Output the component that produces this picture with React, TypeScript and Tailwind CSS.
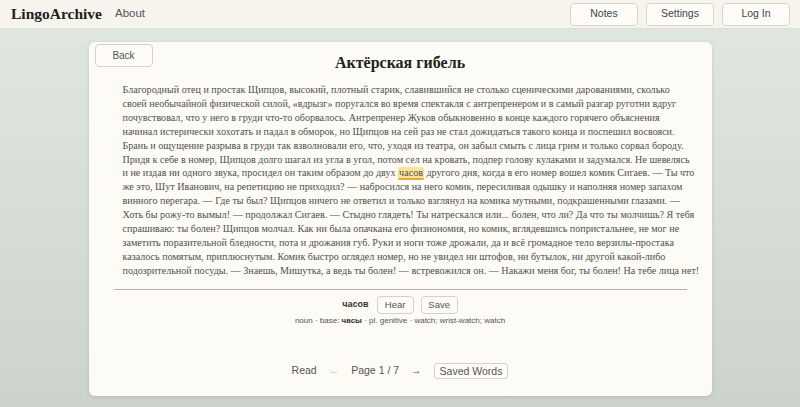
import { useState } from "react";

const serif = { fontFamily: '"Liberation Serif", "DejaVu Serif", serif' };
const sans = { fontFamily: '"Liberation Sans", Arial, sans-serif' };

// Each entry is one printed line of the page; the selected word is marked with [ ]
const LINES = [
  "Благородный отец и простак Щипцов, высокий, плотный старик, славившийся не столько сценическими дарованиями, сколько",
  "своей необычайной физической силой, «вдрызг» поругался во время спектакля с антрепренером и в самый разгар руготни вдруг",
  "почувствовал, что у него в груди что-то оборвалось. Антрепренер Жуков обыкновенно в конце каждого горячего объяснения",
  "начинал истерически хохотать и падал в обморок, но Щипцов на сей раз не стал дожидаться такого конца и поспешил восвояси.",
  "Брань и ощущение разрыва в груди так взволновали его, что, уходя из театра, он забыл смыть с лица грим и только сорвал бороду.",
  "Придя к себе в номер, Щипцов долго шагал из угла в угол, потом сел на кровать, подпер голову кулаками и задумался. Не шевелясь",
  "и не издав ни одного звука, просидел он таким образом до двух [часов] другого дня, когда в его номер вошел комик Сигаев. — Ты что",
  "же это, Шут Иванович, на репетицию не приходил? — набросился на него комик, пересиливая одышку и наполняя номер запахом",
  "винного перегара. — Где ты был? Щипцов ничего не ответил и только взглянул на комика мутными, подкрашенными глазами. —",
  "Хоть бы рожу-то вымыл! — продолжал Сигаев. — Стыдно глядеть! Ты натрескался или... болен, что ли? Да что ты молчишь? Я тебя",
  "спрашиваю: ты болен? Щипцов молчал. Как ни была опачкана его физиономия, но комик, вглядевшись попристальнее, не мог не",
  "заметить поразительной бледности, пота и дрожания губ. Руки и ноги тоже дрожали, да и всё громадное тело верзилы-простака",
  "казалось помятым, приплюснутым. Комик быстро оглядел номер, но не увидел ни штофов, ни бутылок, ни другой какой-либо",
  "подозрительной посуды. — Знаешь, Мишутка, а ведь ты болен! — встревожился он. — Накажи меня бог, ты болен! На тебе лица нет!",
];

function Line({ text }: { text: string }) {
  const m = text.match(/^(.*)\[(.+)\](.*)$/);
  if (!m) return <div className="whitespace-nowrap">{text}</div>;
  return (
    <div className="whitespace-nowrap">
      {m[1]}
      <span className="rounded-[2px] border-b-2 border-[#e2a83c] bg-[#fbe39a] px-[1px]">{m[2]}</span>
      {m[3]}
    </div>
  );
}

function HeaderButton({ children }: { children: string }) {
  return (
    <button
      className="h-[23px] w-[68px] rounded-[4px] border border-[#dcd6ca] bg-[#fdfcf8] text-[10.5px] text-[#444]"
      style={sans}
    >
      {children}
    </button>
  );
}

export default function App() {
  const [page] = useState(1);

  return (
    <div className="flex min-h-[407px] flex-col bg-gradient-to-b from-[#e1e8e1] to-[#ccd3cc]">
      <header className="flex h-[29px] items-center border-b border-[#e3ded3] bg-[#f7f4ee] pl-[11px] pr-[10px]">
        <span className="text-[15.5px] font-bold text-[#1e1e1e]" style={serif}>
          LingoArchive
        </span>
        <span className="ml-[13px] text-[11.5px] text-[#555]" style={sans}>
          About
        </span>
        <div className="ml-auto flex gap-[8px]">
          <HeaderButton>Notes</HeaderButton>
          <HeaderButton>Settings</HeaderButton>
          <HeaderButton>Log In</HeaderButton>
        </div>
      </header>

      <main className="mx-auto mt-[13px] flex w-[623px] flex-col rounded-[6px] bg-[#fcfbf5] px-[6px] pb-[17px] pt-[2px] shadow-[0_1px_4px_rgba(0,0,0,0.12)]">
        <div className="grid grid-cols-[1fr_auto_1fr] items-start">
          <button
            className="h-[23px] w-[58px] justify-self-start rounded-[4px] border border-[#d6d1c6] bg-[#fdfcf8] text-[10px] text-[#555]"
            style={sans}
          >
            Back
          </button>
          <h1 className="pt-[9px] text-[16px] font-bold leading-[20px] text-[#222]" style={serif}>
            Актёрская гибель
          </h1>
          <div />
        </div>

        <div
          className="mt-[10px] px-[28px] text-[10.1px] leading-[13.9px] text-[#505050]"
          style={serif}
        >
          {LINES.map((l, i) => (
            <Line key={i} text={l} />
          ))}
        </div>

        <div className="mx-[19px] mt-[11px] h-px bg-[#b5b0a8]" />

        <div className="mt-[6px] flex items-center justify-center gap-[7px]" style={sans}>
          <span className="mr-[1px] text-[9px] font-bold text-[#333]">часов</span>
          <button className="h-[18px] w-[37px] rounded-[4px] border border-[#d6d1c6] bg-[#fdfcf8] text-[9.5px] text-[#555]">
            Hear
          </button>
          <button className="h-[18px] w-[37px] rounded-[4px] border border-[#d6d1c6] bg-[#fdfcf8] text-[9.5px] text-[#555]">
            Save
          </button>
        </div>
        <div className="mt-[1px] text-center text-[8px] leading-[11px] text-[#555]" style={sans}>
          noun · base: <span className="font-bold text-[#333]">часы</span> · pl. genitive · watch; wrist-watch; watch
        </div>

        <nav
          className="mt-[37px] flex items-center justify-center gap-[12px] text-[10.5px] text-[#555]"
          style={sans}
        >
          <span>Read</span>
          <span className="text-[#c2c2c2]">←</span>
          <span>Page {page} / 7</span>
          <span>→</span>
          <button className="h-[16px] rounded-[3px] border border-[#d6d1c6] bg-[#fdfcf8] px-[5px] text-[10.5px] leading-[14px] text-[#555]">
            Saved Words
          </button>
        </nav>
      </main>
    </div>
  );
}
